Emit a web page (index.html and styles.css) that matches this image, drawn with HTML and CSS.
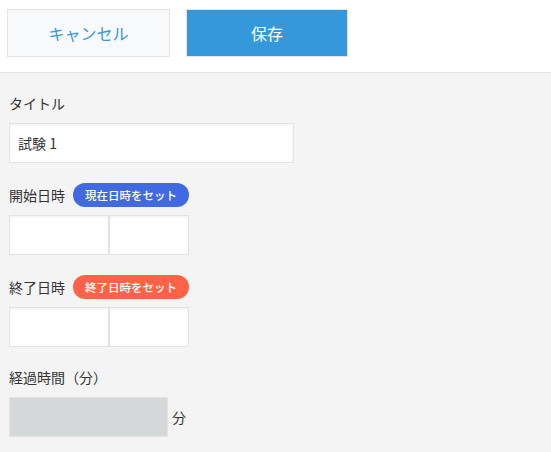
FILE: index.html
```html
<!DOCTYPE html>
<html lang="ja">
<head>
<meta charset="utf-8">
<link rel="stylesheet" href="styles.css">
</head>
<body>
<div class="toolbar">
  <button class="btn btn-cancel">キャンセル</button>
  <button class="btn btn-save">保存</button>
</div>
<div class="form">
  <div class="field">
    <div class="label">タイトル</div>
    <div class="input input-text">試験 1</div>
  </div>
  <div class="field">
    <div class="label-row">
      <span class="label-inline">開始日時</span>
      <span class="pill pill-blue">現在日時をセット</span>
    </div>
    <div class="datetime">
      <div class="input date"></div>
      <div class="input time"></div>
    </div>
  </div>
  <div class="field">
    <div class="label-row">
      <span class="label-inline">終了日時</span>
      <span class="pill pill-red">終了日時をセット</span>
    </div>
    <div class="datetime">
      <div class="input date"></div>
      <div class="input time"></div>
    </div>
  </div>
  <div class="field field-last">
    <div class="label">経過時間（分）</div>
    <div class="calc-row">
      <div class="calc"></div>
      <span class="unit">分</span>
    </div>
  </div>
</div>
</body>
</html>
```

FILE: styles.css
```css
html, body {
  margin: 0;
  padding: 0;
  height: 100%;
}
body {
  font-family: "Noto Sans CJK JP", "Noto Sans", sans-serif;
  color: #333;
  background: #f4f4f4;
}
.toolbar {
  background: #fff;
  display: flex;
  gap: 16px;
  padding: 9px 0 15px 7px;
  border-bottom: 1px solid #e3e3e3;
}
.btn {
  font-family: inherit;
  font-size: 16px;
  height: 48px;
  border: 1px solid #e3e3e3;
  margin: 0;
  padding: 0;
  cursor: pointer;
}
.btn-cancel {
  width: 163px;
  background: #f7f9fa;
  color: #3498db;
}
.btn-save {
  width: 162px;
  background: #3498db;
  color: #fff;
}
.form {
  padding: 20px 0 0 9px;
}
.field {
  margin-bottom: 20px;
}
.label {
  font-size: 14px;
  line-height: 20px;
  height: 20px;
  margin-bottom: 10px;
}
.label-row {
  display: flex;
  align-items: center;
  height: 24px;
  margin-bottom: 8px;
}
.label-inline {
  font-size: 14px;
  line-height: 20px;
  margin-right: 8px;
}
.pill {
  display: inline-flex;
  align-items: center;
  justify-content: center;
  width: 116px;
  height: 24px;
  border-radius: 12px;
  color: #fff;
  font-size: 11.5px;
  font-weight: 500;
}
.pill-blue {
  background: #4169e1;
}
.pill-red {
  background: #ff6347;
}
.input {
  box-sizing: border-box;
  height: 40px;
  background: #fff;
  border: 1px solid #e3e3e3;
  box-shadow: inset 0 1px 3px #f0f0f0;
}
.input-text {
  width: 285px;
  font-size: 14px;
  line-height: 38px;
  padding-left: 8px;
}
.datetime {
  display: flex;
}
.date {
  width: 100px;
}
.time {
  width: 80px;
}
.calc-row {
  display: flex;
  align-items: center;
}
.calc {
  box-sizing: border-box;
  width: 159px;
  height: 40px;
  background: #d4d8d9;
  border: 1px solid #e3e3e3;
}
.unit {
  font-size: 14px;
  margin-left: 4px;
}
```
